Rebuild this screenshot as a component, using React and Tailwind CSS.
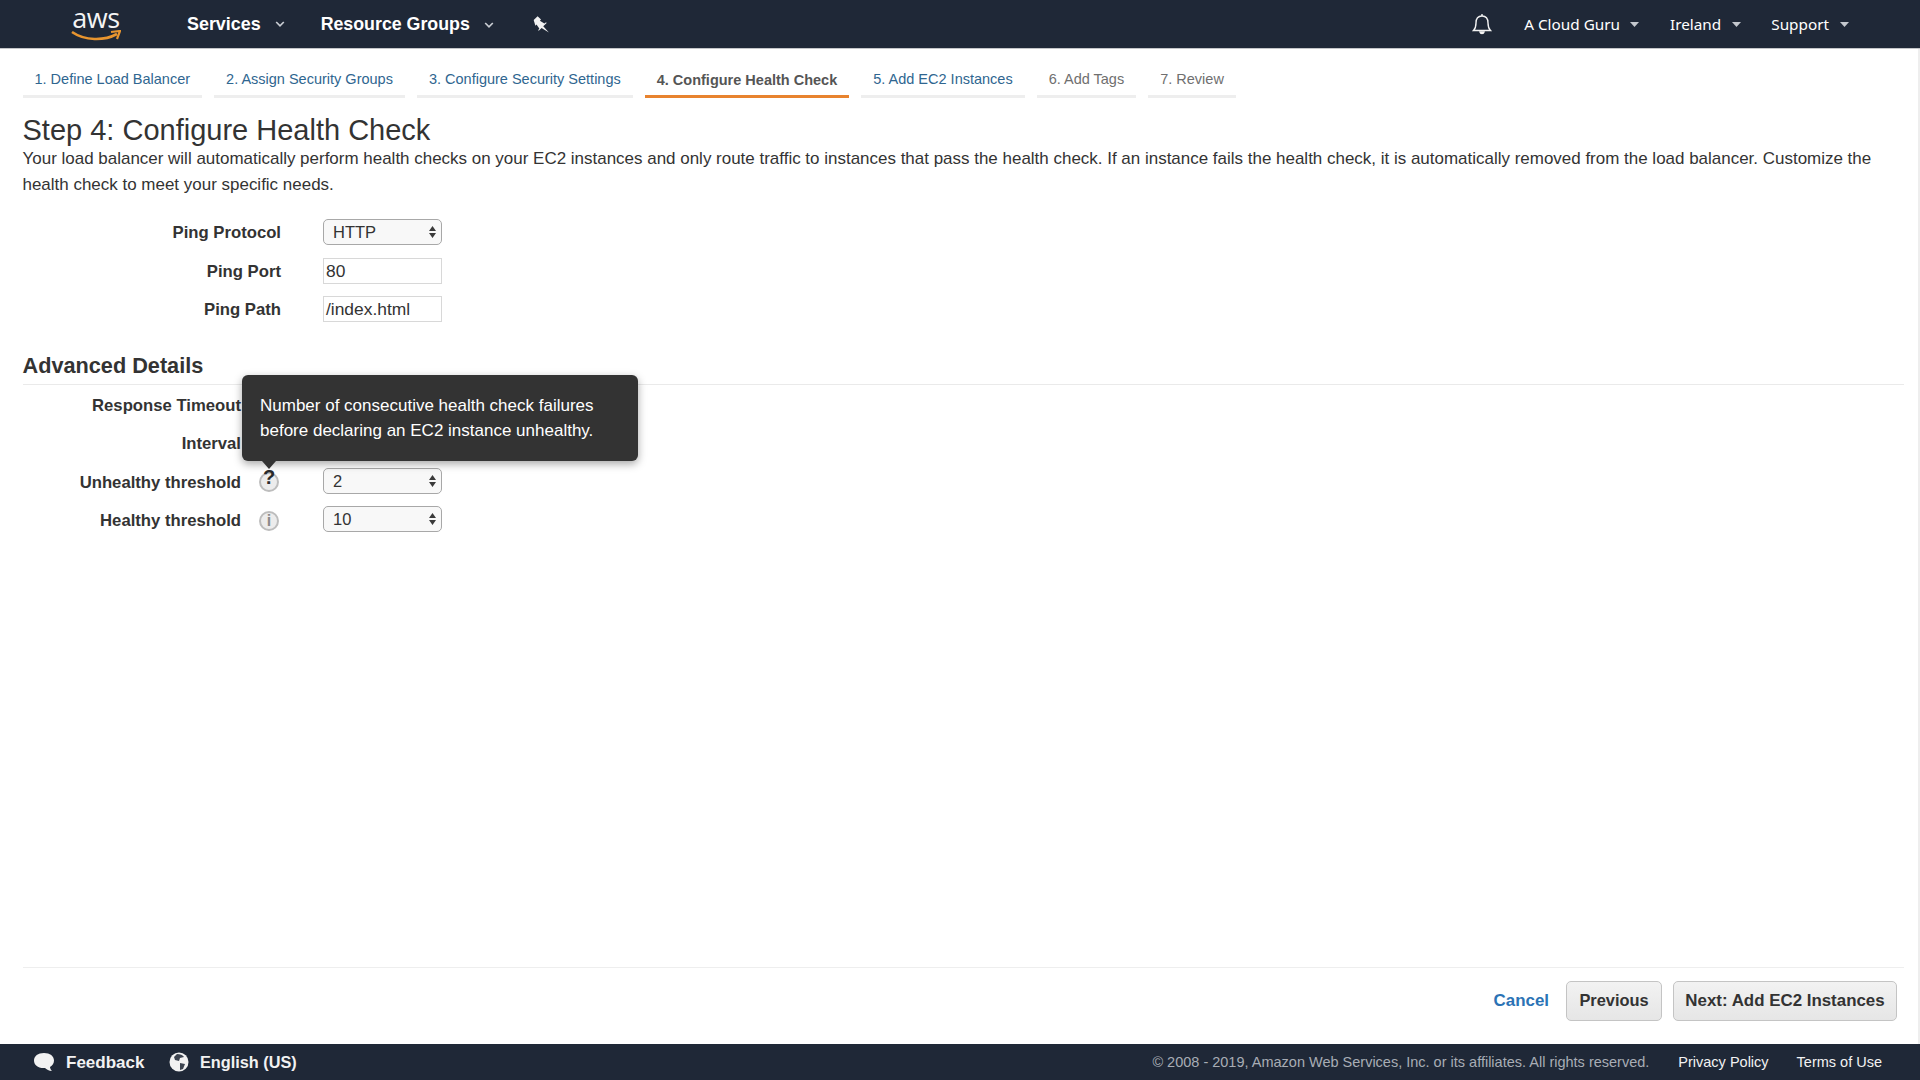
import React from "react";

const sans = "font-['Liberation_Sans',Arial,sans-serif]";

function Caret({ className = "" }) {
  return (
    <svg width="10" height="6" viewBox="0 0 10 6" className={className}>
      <path d="M1.2 1 L5 4.8 L8.8 1" fill="none" stroke="#c8ccd2" strokeWidth="1.7" />
    </svg>
  );
}

function SmallCaret() {
  return (
    <svg width="9" height="5" viewBox="0 0 9 5">
      <path d="M0 0 H9 L4.5 5 Z" fill="#c4c8ce" />
    </svg>
  );
}

function Tab({ children, kind = "link" }) {
  const text =
    kind === "active"
      ? "text-[#555555] font-bold border-[#e8832e] pt-[1px]"
      : kind === "off"
      ? "text-[#6f6f6f] border-[#eeeeee]"
      : "text-[#2f6690] border-[#eeeeee]";
  return (
    <div className={`h-[32px] px-3 border-b-[3px] text-[14.5px] leading-[26px] whitespace-nowrap ${text}`}>
      {children}
    </div>
  );
}

function Select({ value }) {
  return (
    <div className="w-[119px] h-[26px] rounded-[5px] border border-[#a8a8a8] bg-[#f8f8f8] flex items-center justify-between pl-[9px] pr-[4px] text-[16.5px] text-[#333333]">
      <span className="leading-[22px]">{value}</span>
      <svg width="9" height="14" viewBox="0 0 9 14">
        <path d="M4.5 1 L8 6 H1 Z M4.5 13 L1 8 H8 Z" fill="#3a3a3a" />
      </svg>
    </div>
  );
}

function Input({ value }) {
  return (
    <div className="w-[119px] h-[26px] border border-[#d8d8d8] bg-white flex items-center pl-[2px] text-[17.4px] text-[#333333]">
      {value}
    </div>
  );
}

function InfoIcon() {
  return (
    <div className="w-[20px] h-[20px] mt-[3px] rounded-full border-2 border-[#bdbdbd] bg-[#ececec] flex items-center justify-center text-[16px] font-bold text-[#8a8a8a] leading-none">
      i
    </div>
  );
}

function HelpIcon() {
  return (
    <div className="relative w-[20px] h-[20px] mt-[2px] rounded-full border-2 border-[#bdbdbd] bg-[#ececec]">
      <span className="absolute left-[2px] -top-[8px] text-[20px] font-bold text-[#2a2a2a] leading-[22px]">?</span>
    </div>
  );
}

function FormRow({ label, children }) {
  return (
    <div className="flex items-center h-[38.5px]">
      <div className="w-[281px] pt-[1px] text-right font-bold text-[16.7px] text-[#333333] whitespace-nowrap">{label}</div>
      <div className="ml-[42px]">{children}</div>
    </div>
  );
}

function AdvRow({ label, icon, children }) {
  return (
    <div className="flex items-center h-[38.5px]">
      <div className="w-[241px] pt-[3px] text-right font-bold text-[16.7px] text-[#333333] whitespace-nowrap">{label}</div>
      <div className="w-[82px] pl-[18px]">{icon}</div>
      <div>{children}</div>
    </div>
  );
}

export default function App() {
  return (
    <div className={`h-screen w-full flex flex-col bg-white overflow-hidden ${sans}`}>
      <header className="h-[49px] shrink-0 bg-[#1f2837] border-b border-[#c4c6c9] flex items-center text-white">
        <div className="ml-[71px] w-[50px] h-[40px] relative flex flex-col items-center">
          <span className="font-['Open_Sans',sans-serif] text-[27px] leading-[26px] mt-[1px] tracking-[-0.5px] text-[#f4f4f4]">aws</span>
          <svg width="50" height="12" viewBox="0 0 50 12" className="-mt-[1px]">
            <path d="M1 2 C14 11 33 11 46 4" fill="none" stroke="#e8952f" strokeWidth="2.6" />
            <path d="M40 2 L49 1 L46 9" fill="none" stroke="#e8952f" strokeWidth="2.2" />
          </svg>
        </div>
        <div className="ml-[66px] pt-[1px] flex items-center gap-[14px] text-[17.9px] font-bold">
          <span>Services</span>
          <Caret />
        </div>
        <div className="ml-[36px] pt-[1px] flex items-center gap-[14px] text-[17.8px] font-bold">
          <span>Resource Groups</span>
          <Caret />
        </div>
        <svg width="18" height="18" viewBox="0 0 16 16" className="ml-[38px] mb-[1px]">
          <path d="M1.5 4.5 L5 1 L8 4 L7 5 L11 7.5 L12.5 6.5 L13 7 L10 10 L15 15.5 L8.5 11.5 L6 14 L5.5 13.5 L6.5 12 L4 8.5 L3 9.5 Z" fill="#f2f2f2" />
        </svg>
        <div className="ml-auto flex items-center font-['Noto_Sans',sans-serif] text-[15.3px]">
          <svg width="20" height="22" viewBox="0 0 20 22" fill="none" stroke="#f2f2f2" strokeWidth="1.4">
            <path d="M1.5 17.5 C3.5 15.5 4 13.5 4 10 C4 5.5 6.5 3 10 3 C13.5 3 16 5.5 16 10 C16 13.5 16.5 15.5 18.5 17.5 Z" />
            <path d="M10 1 V3" />
            <path d="M8 19 C8.5 21 11.5 21 12 19 Z" fill="#f2f2f2" />
          </svg>
          <div className="ml-[32px] flex items-center gap-[10px]">
            <span>A Cloud Guru</span>
            <SmallCaret />
          </div>
          <div className="ml-[31px] flex items-center gap-[11px]">
            <span>Ireland</span>
            <SmallCaret />
          </div>
          <div className="ml-[30px] mr-[71px] flex items-center gap-[11px]">
            <span>Support</span>
            <SmallCaret />
          </div>
        </div>
      </header>

      <main className="flex-1 flex flex-col min-h-0 border-r-2 border-[#eeeeee]">
        <nav className="flex gap-3 ml-[22.5px] mt-[17px]">
          <Tab>1. Define Load Balancer</Tab>
          <Tab>2. Assign Security Groups</Tab>
          <Tab>3. Configure Security Settings</Tab>
          <Tab kind="active">4. Configure Health Check</Tab>
          <Tab>5. Add EC2 Instances</Tab>
          <Tab kind="off">6. Add Tags</Tab>
          <Tab kind="off">7. Review</Tab>
        </nav>

        <section className="pl-[22.5px] pr-[14px] flex-1 min-h-0 flex flex-col">
          <h1 className="mt-[15px] text-[29px] leading-[34px] text-[#333333]">Step 4: Configure Health Check</h1>
          <p className="-mt-[1px] text-[16.985px] leading-[25.5px] text-[#333333]">
            Your load balancer will automatically perform health checks on your EC2 instances and only route traffic to instances that pass the health check. If an instance fails the health check, it is automatically removed from the load balancer. Customize the health check to meet your specific needs.
          </p>

          <div className="-ml-[22.5px] mt-[16px]">
            <FormRow label="Ping Protocol"><Select value="HTTP" /></FormRow>
            <FormRow label="Ping Port"><Input value="80" /></FormRow>
            <FormRow label="Ping Path"><Input value="/index.html" /></FormRow>
          </div>

          <h2 className="mt-[23px] text-[21.7px] leading-[28px] font-bold text-[#333333] border-b border-[#eaeaea] pb-[4px]">Advanced Details</h2>

          <div className="-ml-[22.5px] relative">
            <AdvRow label="Response Timeout" />
            <AdvRow label="Interval" />
            <AdvRow label="Unhealthy threshold" icon={<HelpIcon />}><Select value="2" /></AdvRow>
            <AdvRow label="Healthy threshold" icon={<InfoIcon />}><Select value="10" /></AdvRow>

            <div className="absolute left-[242px] -top-[10px] w-[396px] h-[86px] rounded-[6px] bg-[#333333] shadow-[0_3px_8px_rgba(0,0,0,0.35)] px-[18px] py-[18px] text-[17px] leading-[25px] text-white">
              Number of consecutive health check failures
              <br />
              before declaring an EC2 instance unhealthy.
              <div className="absolute left-[20px] -bottom-[8px] w-0 h-0 border-x-[7px] border-x-transparent border-t-[8px] border-t-[#333333]" />
            </div>
          </div>

          <div className="mt-auto border-t border-[#eeeeee] h-[77px] flex items-start justify-end pt-[13px] pr-[7px] gap-[11px]">
            <span className="text-[16.9px] font-bold text-[#2b73b5] mr-[6px] leading-[40px]">Cancel</span>
            <button className="h-[40px] w-[96px] pb-[1px] rounded-[5px] border border-[#c4c4c4] bg-linear-to-b from-[#f2f2f2] to-[#e6e6e6] text-[16.4px] font-bold text-[#333333]">Previous</button>
            <button className="h-[40px] w-[224px] rounded-[5px] border border-[#c4c4c4] bg-linear-to-b from-[#f2f2f2] to-[#e6e6e6] text-[16.9px] font-bold text-[#333333]">Next: Add EC2 Instances</button>
          </div>
        </section>
      </main>

      <footer className="h-[36px] shrink-0 bg-[#1f2837] flex items-center text-[#f2f2f2]">
        <svg width="22" height="20" viewBox="0 0 22 20" className="ml-[33px]">
          <path d="M11 1 C17 1 21 4 21 8.5 C21 11.5 19.5 13.5 17 15 C17 16.5 18 18 19 19 C16 19 13.5 17.5 12 16 C5 16.5 1 13 1 8.5 C1 4 5 1 11 1 Z" fill="#f2f2f2" />
        </svg>
        <span className="ml-[11px] pt-[1px] text-[17px] font-bold">Feedback</span>
        <svg width="20" height="20" viewBox="0 0 20 20" className="ml-[25px]">
          <circle cx="10" cy="10" r="9.5" fill="#f2f2f2" />
          <path d="M8 2 C11 2 14 3 15 5 L11 6 L10 9 L6 8 L5 5 Z M11 11 L16 12 L14 17 L11 18 Z" fill="#3d4450" />
        </svg>
        <span className="ml-[10.5px] pt-[1px] text-[16.3px] font-bold">English (US)</span>
        <div className="ml-auto pt-[1px] flex items-center text-[14.5px]">
          <span className="text-[#a8adb5]">© 2008 - 2019, Amazon Web Services, Inc. or its affiliates. All rights reserved.</span>
          <span className="ml-[29px]">Privacy Policy</span>
          <span className="ml-[28px] mr-[38px]">Terms of Use</span>
        </div>
      </footer>
    </div>
  );
}
